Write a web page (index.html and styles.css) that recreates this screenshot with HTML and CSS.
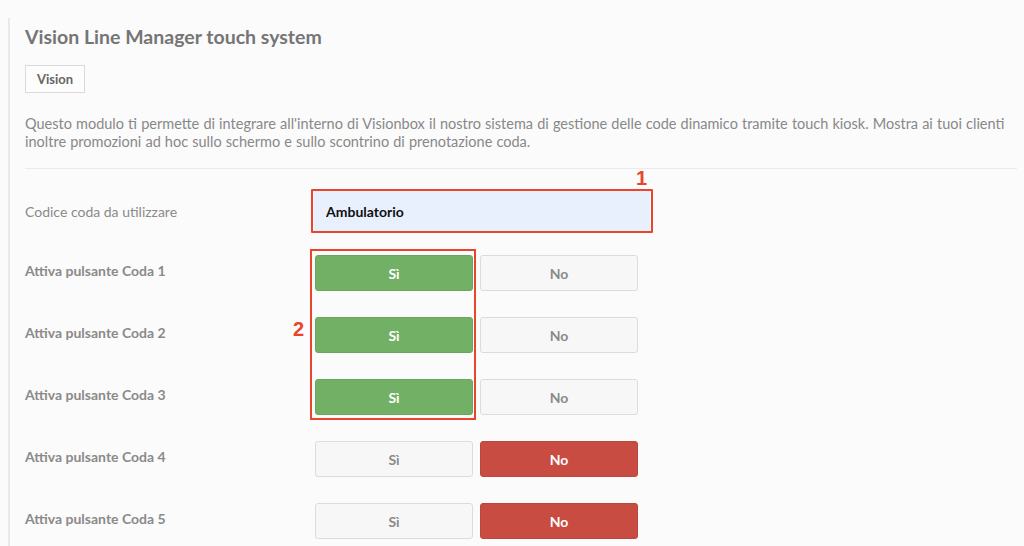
FILE: index.html
```html
<!DOCTYPE html>
<html>
<head>
  <meta charset="utf-8">
  <meta name="viewport" content="width=device-width, initial-scale=1">
  <title>Vision Line Manager touch system</title>
  <link rel="stylesheet" href="styles.css">
</head>
<body>
  <div class='panel'>
    <h1 class='title'>Vision Line Manager touch system</h1>
    <span class='tag'>Vision</span>
    <p class='intro'>Questo modulo ti permette di integrare all'interno di Visionbox il nostro sistema di gestione delle code dinamico tramite touch kiosk. Mostra ai tuoi clienti inoltre promozioni ad hoc sullo schermo e sullo scontrino di prenotazione coda.</p>
    <hr class='divider'>

    <div class='form'>
      <div class='row'>
        <label class='label label-light'>Codice coda da utilizzare</label>
        <div class='mark mark-input'>
          <input class='field' type='text' value='Ambulatorio'>
          <span class='mark-num num-1'>1</span>
        </div>
      </div>

      <div class='row'>
        <label class='label'>Attiva pulsante Coda 1</label>
        <div class='toggle'>
          <button class='btn btn-yes'>Sì</button>
          <button class='btn'>No</button>
          <div class='mark mark-group'><span class='mark-num num-2'>2</span></div>
        </div>
      </div>

      <div class='row'>
        <label class='label'>Attiva pulsante Coda 2</label>
        <div class='toggle'>
          <button class='btn btn-yes'>Sì</button>
          <button class='btn'>No</button>
        </div>
      </div>

      <div class='row'>
        <label class='label'>Attiva pulsante Coda 3</label>
        <div class='toggle'>
          <button class='btn btn-yes'>Sì</button>
          <button class='btn'>No</button>
        </div>
      </div>

      <div class='row'>
        <label class='label'>Attiva pulsante Coda 4</label>
        <div class='toggle'>
          <button class='btn'>Sì</button>
          <button class='btn btn-no'>No</button>
        </div>
      </div>

      <div class='row'>
        <label class='label'>Attiva pulsante Coda 5</label>
        <div class='toggle'>
          <button class='btn'>Sì</button>
          <button class='btn btn-no'>No</button>
        </div>
      </div>
    </div>
  </div>
</body>
</html>
```

FILE: styles.css
```css
html, body {
  height: 100%;
}
body {
  background-color: #FBFBFB;
  color: #888;
  font-family: 'Lato', 'Liberation Sans', sans-serif;
  margin: 0;
  padding: 0;
  overflow: hidden;
}
.panel {
  margin: 18px 0 0 8px;
  border-left: 2px solid #E9E9E9;
  padding: 7px 7px 0 15px;
  min-height: 600px;
}
.title {
  font-size: 19.5px;
  font-weight: 700;
  color: #757575;
  margin: 0 0 16px;
  line-height: 24px;
}
.tag {
  display: inline-block;
  border: 1px solid #DADADA;
  background-color: #FDFDFD;
  color: #666;
  font-size: 13px;
  font-weight: 700;
  padding: 0 11px;
  height: 26px;
  line-height: 26px;
}
.intro {
  font-size: 14.5px;
  word-spacing: 0.4px;
  line-height: 18px;
  color: #888;
  margin: 22px 0 0;
}
.divider {
  border: none;
  border-top: 1px solid #EBEBEB;
  margin: 17px 0 11px;
}
.form {
  position: relative;
}
.row {
  display: flex;
  align-items: center;
  height: 62px;
}
.label {
  width: 290px;
  flex-shrink: 0;
  font-size: 14px;
  font-weight: 700;
  color: #8A8A8A;
  padding-bottom: 6px;
}
.label-light {
  font-weight: 400;
  padding-bottom: 0;
  width: 286px;
}
.mark {
  border: 2px solid #E8452C;
  position: relative;
}
.mark-input {
  display: flex;
  padding: 0 1px;
  border-radius: 1px;
}
.field {
  width: 336px;
  height: 40px;
  box-sizing: border-box;
  border: none;
  background-color: #E8F0FE;
  font-family: 'Lato', 'Liberation Sans', sans-serif;
  font-size: 14px;
  font-weight: 700;
  color: #111;
  padding: 0 12px;
  outline: none;
}
.mark-num {
  position: absolute;
  color: #E8452C;
  font-family: 'Liberation Sans', 'Lato', sans-serif;
  font-weight: 700;
  font-size: 20px;
  line-height: 20px;
}
.num-1 {
  right: 4px;
  top: -23px;
}
.num-2 {
  left: -19px;
  top: 68px;
}
.toggle {
  display: flex;
  gap: 7px;
  position: relative;
}
.mark-group {
  position: absolute;
  left: -5px;
  top: -6px;
  width: 162px;
  height: 167px;
  pointer-events: none;
}
.btn {
  width: 158px;
  height: 36px;
  border: 1px solid #DCDCDC;
  border-radius: 3px;
  background-color: #F7F7F7;
  color: #8A8A8A;
  font-family: 'Lato', 'Liberation Sans', sans-serif;
  font-size: 14px;
  font-weight: 700;
  cursor: pointer;
}
.btn-yes {
  background-color: #71B065;
  border-color: #6AA75E;
  color: #FFFFFF;
}
.btn-no {
  background-color: #C84C41;
  border-color: #BF463B;
  color: #FFFFFF;
}
```
